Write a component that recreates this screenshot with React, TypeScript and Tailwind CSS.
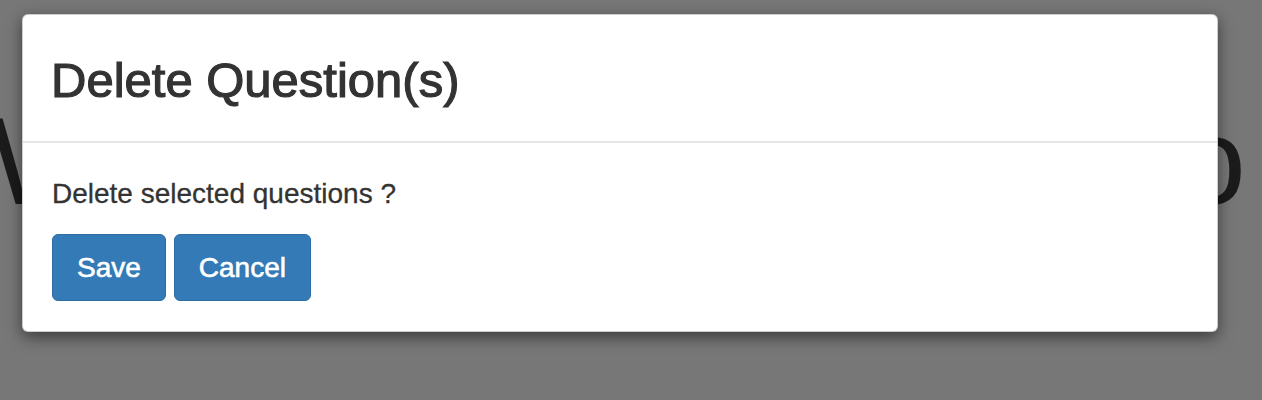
import React from "react";

export default function App() {
  return (
    <div
      className="relative w-[1262px] h-[400px] overflow-hidden bg-[#777777]"
      style={{ fontFamily: '"Liberation Sans", Arial, sans-serif' }}
    >
      {/* page heading behind the backdrop */}
      <div className="flex justify-between pt-[86px] text-[124px] leading-[150px] text-[#1b1b1b]">
        <span className="w-[22px] overflow-hidden whitespace-nowrap">
          <span className="ml-[-10px]">W</span>
        </span>
        <span className="mr-[16px]">o</span>
      </div>

      {/* Modal */}
      <div className="absolute left-[22px] top-[14px] w-[1196px] bg-white border border-black/20 rounded-[6px] shadow-[0_5px_15px_rgba(0,0,0,0.5)]">
        <div className="pl-[28px] pr-[29px] pt-[37px] pb-[33px] border-b-2 border-[#e5e5e5]">
          <h4 className="text-[49px] leading-[56px] font-normal text-[#333] [-webkit-text-stroke:1.2px_#333]">
            Delete Question(s)
          </h4>
        </div>
        <div className="px-[29px] pt-[31px] pb-[30px]">
          <p className="text-[28px] leading-[40px] text-[#333] [-webkit-text-stroke:0.3px_#333]">
            Delete selected questions ?
          </p>
          <div className="flex gap-[8px] mt-[20px]">
            <button className="h-[67px] px-[24px] flex items-center bg-[#337ab7] border border-[#2e6da4] rounded-[6px] text-white text-[28px] [-webkit-text-stroke:0.6px_#fff]">
              Save
            </button>
            <button className="h-[67px] px-[24px] flex items-center bg-[#337ab7] border border-[#2e6da4] rounded-[6px] text-white text-[28px] [-webkit-text-stroke:0.6px_#fff]">
              Cancel
            </button>
          </div>
        </div>
      </div>
    </div>
  );
}
